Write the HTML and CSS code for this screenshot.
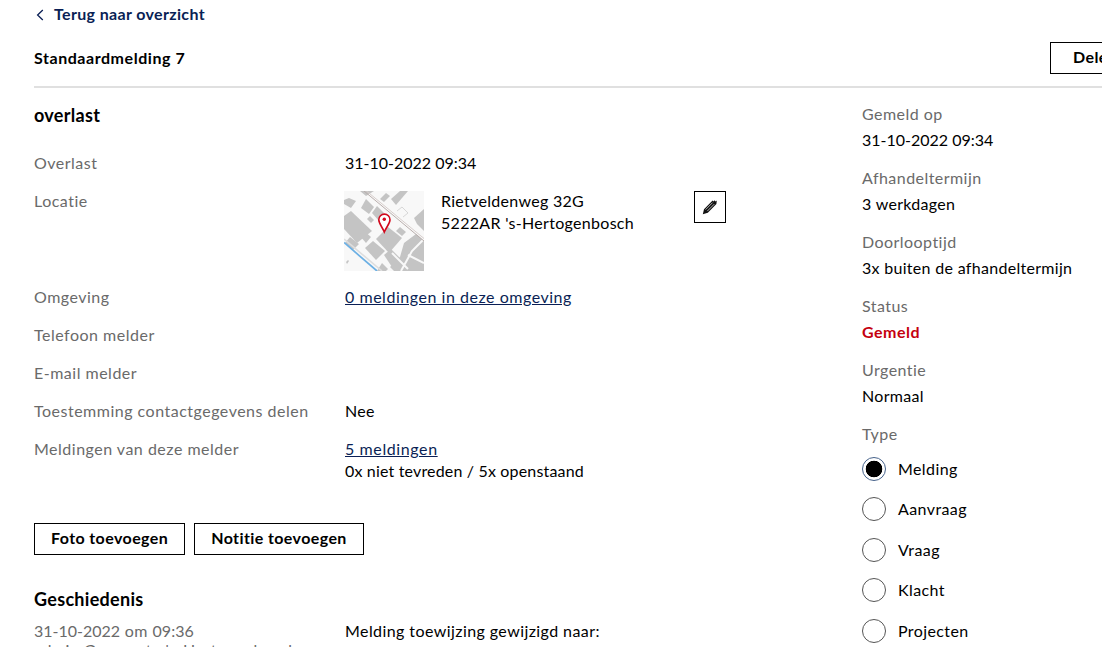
FILE: index.html
```html
<!DOCTYPE html>
<html lang="nl">
<head>
<meta charset="utf-8">
<title>Standaardmelding 7</title>
<link rel="stylesheet" href="styles.css">
</head>
<body>
<div class="page">
  <a class="back" href="#"><svg class="chev" width="8" height="12" viewBox="0 0 8 12"><path d="M6.8 1 L1.6 6 L6.8 11" fill="none" stroke="#0a1f55" stroke-width="1.3"/></svg>Terug naar overzicht</a>
  <header class="head">
    <h1>Standaardmelding 7</h1>
    <button class="btn delen">Delen</button>
  </header>
  <div class="cols">
    <main class="main">
      <h2>overlast</h2>
      <div class="row r1"><div class="lbl">Overlast</div><div class="val num">31-10-2022 09:34</div></div>
      <div class="row r2"><div class="lbl">Locatie</div>
        <div class="val loc">
          <svg class="map" width="80" height="80" viewBox="0 0 80 80">
            <rect width="80" height="80" fill="#f8f8f8"/>
            <g fill="#c4c4c4">
              <polygon points="5,7 12,10 7,17 0,13 0,9"/>
              <polygon points="22,8 30,16 25,23 17,17"/>
              <polygon points="33,15 40,22 35,30 28,22"/>
              <polygon points="47,8 56,0 64,0 52,14"/>
              <polygon points="16,0 30,0 22,5"/>
              <polygon points="70,27 80,18 80,40 73,33"/>
              <polygon points="0,25 7,20 28,40 13,52 0,38"/>
              <polygon points="44,36 58,47 45,62 32,48"/>
              <polygon points="56,36 62,41 58,45 52,40"/>
              <polygon points="18,38 27,46 22,52 16,45"/>
              <polygon points="6,46 15,53 9,59 1,52"/>
              <polygon points="21,57 29,50 41,60 32,69"/>
              <polygon points="40,64 47,58 56,67 48,76"/>
              <polygon points="38,72 44,78 42,80 33,80"/>
              <polygon points="60,52 72,43 80,50 80,80 50,80 46,76 56,66"/>
              <polygon points="26,25 30,29 27,32 23,28"/>
              <polygon points="36,8 42,2 46,5 40,11"/>
              <polygon points="2,71 4,69 5,70 3,73"/>
            </g>
            <path d="M57 80 L68 60 L80 48 M48 62 L64 78 M64 64 L80 72" stroke="#f8f8f8" stroke-width="2" fill="none"/>
            <path d="M53 20 L58 16 L64 22 L59 26" stroke="#c9c9c9" stroke-width=".7" fill="none"/>
            <path d="M20 0 L80 50" stroke="#b8adab" stroke-width="1" fill="none"/>
            <path d="M22.5 0 L80 47.5" stroke="#d6cdcb" stroke-width="1" fill="none"/>
            <path d="M0 48 L38 80" stroke="#dedede" stroke-width="1.6" fill="none"/>
            <path d="M0 51.5 L33 80" stroke="#6cb0e4" stroke-width="1.7" fill="none"/>
            <path d="M40.3 41 C38 35.5 34.8 32.5 34.8 28.7 A5.6 5.6 0 0 1 46 28.7 C46 32.5 42.7 35.5 40.3 41 Z" fill="#fff" stroke="#d2081c" stroke-width="1.6"/>
            <circle cx="40.3" cy="28.3" r="1.7" fill="#d2081c"/>
          </svg>
          <div class="addr">Rietveldenweg 32G<br>5222AR 's-Hertogenbosch</div>
          <button class="edit"><svg width="16" height="16" viewBox="0 0 16 16"><path d="M0.8 15.2 L2 10.2 L10.6 1.6 L11.6 2.6 L12.6 1.3 L13.6 2.4 L14.8 1.6 L14.4 5 L5.8 13.8 Z" fill="#111"/><path d="M3.6 10.6 L10.6 3.6 M5.3 12.1 L12.3 5.1" stroke="#fff" stroke-width=".7"/></svg></button>
        </div>
      </div>
      <div class="row r3"><div class="lbl">Omgeving</div><div class="val link-val"><a href="#">0 meldingen in deze omgeving</a></div></div>
      <div class="row r1"><div class="lbl">Telefoon melder</div><div class="val"></div></div>
      <div class="row r1"><div class="lbl">E-mail melder</div><div class="val"></div></div>
      <div class="row r1"><div class="lbl">Toestemming contactgegevens delen</div><div class="val">Nee</div></div>
      <div class="row"><div class="lbl">Meldingen van deze melder</div><div class="val tight"><a href="#">5 meldingen</a><br>0x niet tevreden / 5x openstaand</div></div>
      <div class="actions"><button class="btn">Foto toevoegen</button><button class="btn">Notitie toevoegen</button></div>
      <h2 class="hist">Geschiedenis</h2>
      <div class="row"><div class="lbl hist-lbl"><span class="num">31-10-2022</span> om <span class="num">09:36</span><br>admin Gemeente 's-Hertogenbosch</div><div class="val wide">Melding toewijzing gewijzigd naar:</div></div>
    </main>
    <aside class="side">
      <div class="meta"><div class="lbl">Gemeld op</div><div class="val num">31-10-2022 09:34</div></div>
      <div class="meta"><div class="lbl">Afhandeltermijn</div><div class="val">3 werkdagen</div></div>
      <div class="meta"><div class="lbl">Doorlooptijd</div><div class="val">3x buiten de afhandeltermijn</div></div>
      <div class="meta"><div class="lbl">Status</div><div class="val status">Gemeld</div></div>
      <div class="meta"><div class="lbl">Urgentie</div><div class="val">Normaal</div></div>
      <div class="meta"><div class="lbl">Type</div>
        <div class="radios">
          <div class="radio on"><span class="dot"></span>Melding</div>
          <div class="radio"><span class="dot"></span>Aanvraag</div>
          <div class="radio"><span class="dot"></span>Vraag</div>
          <div class="radio"><span class="dot"></span>Klacht</div>
          <div class="radio"><span class="dot"></span>Projecten</div>
        </div>
      </div>
    </aside>
  </div>
</div>
</body>
</html>
```

FILE: styles.css
```css
html, body { margin: 0; padding: 0; height: 647px; overflow: hidden; background: #fff; }
body { font-family: Lato, "Noto Sans", sans-serif; font-size: 16px; line-height: 22px; color: #000; letter-spacing: .3px; }
.page { width: 1200px; padding: 3px 0 0 34px; box-sizing: border-box; }
.back { display: flex; align-items: center; height: 22px; color: #0a1f55; font-weight: 700; text-decoration: none; letter-spacing: .35px; }
.chev { margin: 2px 10px 0 2px; }
.head { display: flex; justify-content: space-between; align-items: center; width: 1166px; height: 57px; padding-top: 4px; border-bottom: 2px solid #e0e0e0; }
h1 { margin: 0; font-size: 16px; font-weight: 700; line-height: 22px; letter-spacing: .55px; }
h2 { margin: 0; font-size: 18px; font-weight: 700; line-height: 24px; letter-spacing: .3px; }
.btn { font: 700 16px/22px Lato, sans-serif; letter-spacing: .4px; color: #000; background: #fff; border: 1px solid #000; border-radius: 0; padding: 3px 16px 5px; height: 32px; }
.delen { margin-right: 50px; width: 100px; padding: 3px 0 5px 22px; text-align: left; }
.cols { display: flex; }
.main { width: 828px; padding-top: 15px; }
.main h2 { margin-bottom: 25px; }
.row { display: flex; }
.r1 { height: 38px; }
.r2 { height: 96px; }
.r3 { height: 38px; }
.lbl { color: #6a6a6a; }
.row .lbl { width: 311px; flex: none; letter-spacing: .5px; }
.num { letter-spacing: 0; }
.val a { color: #0a1f55; text-decoration: underline; }
.link-val { letter-spacing: .53px; }
.tight { letter-spacing: .17px; }
.tight a { letter-spacing: .6px; }
.wide { letter-spacing: .42px; }
.loc { display: flex; align-items: flex-start; margin: 0 0 0 -1px; }
.map { margin-top: 1px; flex: none; }
.addr { margin: 0 0 0 17px; width: 253px; }
.edit { width: 32px; height: 32px; margin-top: 1px; padding: 0; background: #fff; border: 1px solid #000; display: flex; align-items: center; justify-content: center; }
.actions { display: flex; gap: 9px; margin-top: 41px; }
.hist { margin-top: 32px; margin-bottom: 9px !important; }
.hist-lbl { line-height: 19px; padding-top: 1px; }
.side { padding-top: 15px; }
.meta { margin-bottom: 16px; }
.meta .lbl { margin-bottom: 4px; letter-spacing: .45px; }
.status { color: #c5000f; font-weight: 700; letter-spacing: .5px; }
.radios { display: flex; flex-direction: column; gap: 16.4px; margin-top: 12px; letter-spacing: .4px; }
.radio { display: flex; align-items: center; height: 24px; }
.dot { width: 22px; height: 22px; border: 1px solid #555; border-radius: 50%; margin-right: 12px; flex: none; }
.radio.on .dot { background: radial-gradient(circle, #000 0, #000 8px, #fff 8.6px); border-color: #46628a; }
```
